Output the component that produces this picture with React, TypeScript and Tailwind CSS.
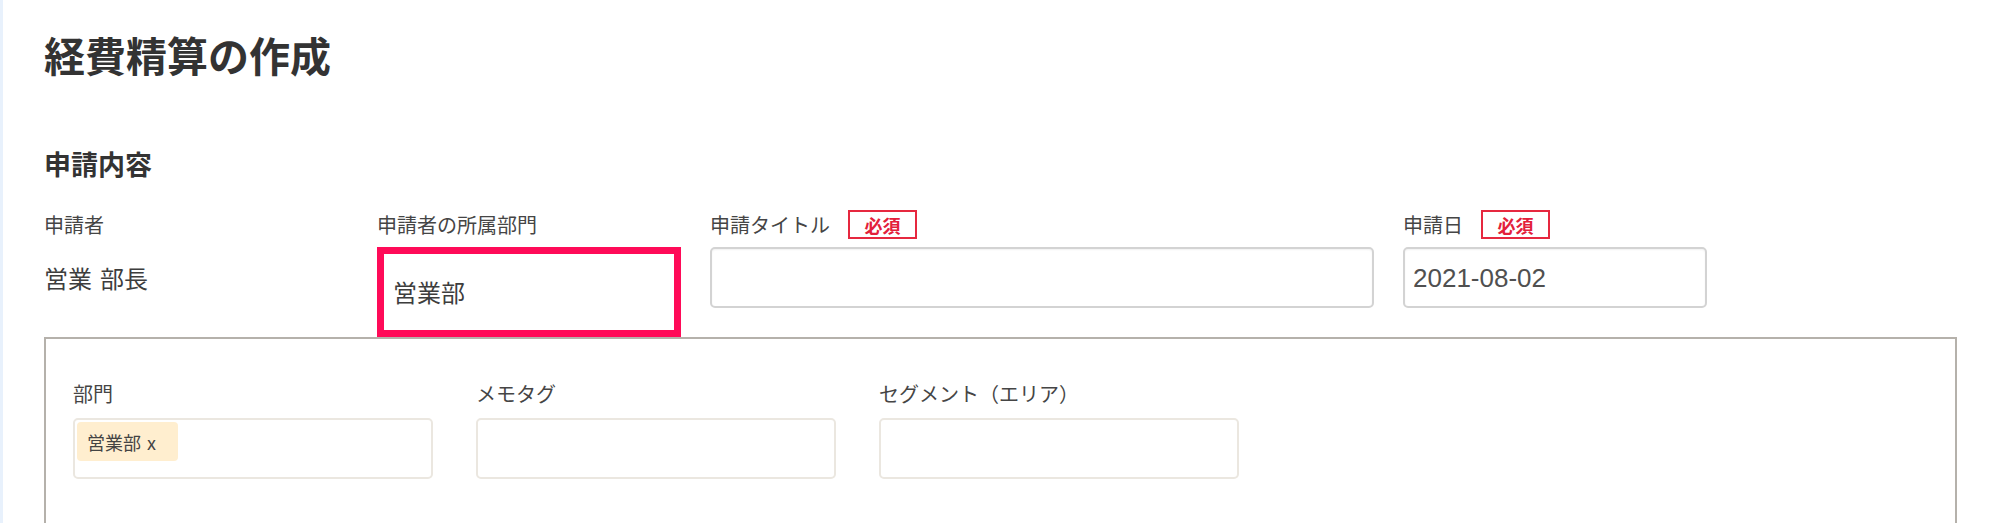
const font = { fontFamily: '"Noto Sans CJK JP", "Noto Sans", sans-serif' };

function RequiredBadge() {
  return (
    <span className="ml-[18px] inline-flex h-[29px] w-[69px] items-center justify-center border-2 border-[#e6283f] text-[18px] font-bold leading-none text-[#e3203a]">
      必須
    </span>
  );
}

function FieldLabel({ text, required }: { text: string; required?: boolean }) {
  return (
    <div className="flex h-[29px] items-center">
      <span className="text-[20px] leading-none text-[#454545]">{text}</span>
      {required && <RequiredBadge />}
    </div>
  );
}

function TagInput({ tags }: { tags: string[] }) {
  return (
    <div className="mt-[10px] flex h-[61px] w-[360px] items-start rounded-[5px] border-2 border-[#ebe7e0] p-[2px]">
      {tags.map((tag) => (
        <span
          key={tag}
          className="flex h-[39px] w-[101px] items-center gap-[6px] rounded-[4px] bg-[#ffeecf] pl-[10px] text-[18px] leading-none text-[#444]"
        >
          <span>{tag}</span>
          <span>x</span>
        </span>
      ))}
    </div>
  );
}

export default function App() {
  return (
    <div className="flex min-h-screen bg-white text-[#333]" style={font}>
      <div className="w-[3px] shrink-0 bg-[#e8f1fc]" />

      <div className="flex-1 pl-[41px] pr-[42px]">
        <h1 className="pt-[34px] text-[41px] font-bold leading-none text-[#333]">経費精算の作成</h1>

        <h2 className="mt-[75px] text-[27px] font-bold leading-none text-[#333]">申請内容</h2>

        {/* 申請者・所属部門・タイトル・申請日 */}
        <div className="mt-[33px] flex items-start gap-[29px]">
          <div className="w-[304px]">
            <FieldLabel text="申請者" />
            <div className="mt-[8px] flex h-[61px] items-center gap-[8px] text-[24px] leading-none text-[#3d3d3d]">
              <span>営業</span>
              <span>部長</span>
            </div>
          </div>

          <div className="w-[304px]">
            <FieldLabel text="申請者の所属部門" />
            <div className="mt-[8px] flex h-[90px] items-center border-[7px] border-[#ff0a58] pl-[9px] text-[24px] leading-none text-[#3d3d3d]">
              営業部
            </div>
          </div>

          <div className="w-[664px]">
            <FieldLabel text="申請タイトル" required />
            <div className="mt-[8px] h-[61px] rounded-[5px] border-2 border-[#d3d3d3] shadow-[inset_0_1px_2px_rgba(0,0,0,0.06)]" />
          </div>

          <div className="w-[304px]">
            <FieldLabel text="申請日" required />
            <div className="mt-[8px] flex h-[61px] items-center rounded-[5px] border-2 border-[#d3d3d3] pl-[8px] shadow-[inset_0_1px_2px_rgba(0,0,0,0.06)]">
              <span
                className="text-[26px] leading-none text-[#505050]"
                style={{ fontFamily: '"Liberation Sans", Arial, sans-serif' }}
              >
                2021-08-02
              </span>
            </div>
          </div>
        </div>

        {/* 部門・メモタグ・セグメント */}
        <div className="border-2 border-[#b5b1ab] px-[27px] pt-[40px] pb-[80px]">
          <div className="flex gap-[43px]">
            <div>
              <FieldLabel text="部門" />
              <TagInput tags={["営業部"]} />
            </div>
            <div>
              <FieldLabel text="メモタグ" />
              <TagInput tags={[]} />
            </div>
            <div>
              <FieldLabel text="セグメント（エリア）" />
              <TagInput tags={[]} />
            </div>
          </div>
        </div>
      </div>
    </div>
  );
}
